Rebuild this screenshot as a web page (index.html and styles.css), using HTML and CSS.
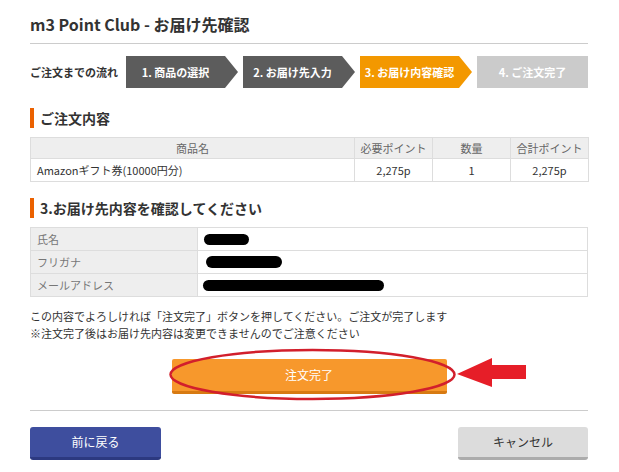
FILE: index.html
```html
<!DOCTYPE html>
<html lang="ja">
<head>
<meta charset="utf-8">
<title>m3 Point Club - お届け先確認</title>
<link rel="stylesheet" href="styles.css">
</head>
<body>
<div class="page">
  <h1 class="title">m3 Point Club - お届け先確認</h1>

  <div class="flow">
    <div class="flow-label">ご注文までの流れ</div>
    <div class="steps">
      <div class="step step-done">1. 商品の選択</div>
      <div class="step step-done">2. お届け先入力</div>
      <div class="step step-current">3. お届け内容確認</div>
      <div class="step step-next">4. ご注文完了</div>
    </div>
  </div>

  <h2 class="section-heading first">ご注文内容</h2>
  <table class="order-table">
    <thead>
      <tr>
        <th class="col-name">商品名</th>
        <th class="col-num">必要ポイント</th>
        <th class="col-num">数量</th>
        <th class="col-num">合計ポイント</th>
      </tr>
    </thead>
    <tbody>
      <tr>
        <td class="left">Amazonギフト券(10000円分)</td>
        <td>2,275p</td>
        <td>1</td>
        <td>2,275p</td>
      </tr>
    </tbody>
  </table>

  <h2 class="section-heading second">3.お届け先内容を確認してください</h2>
  <table class="address-table">
    <tbody>
      <tr>
        <th>氏名</th>
        <td><span class="redact redact-name"></span></td>
      </tr>
      <tr>
        <th>フリガナ</th>
        <td><span class="redact redact-kana"></span></td>
      </tr>
      <tr>
        <th>メールアドレス</th>
        <td><span class="redact redact-mail"></span></td>
      </tr>
    </tbody>
  </table>

  <p class="notice">この内容でよろしければ「注文完了」ボタンを押してください。ご注文が完了します<br>※注文完了後はお届け先内容は変更できませんのでご注意ください</p>

  <div class="submit-row">
    <button class="btn btn-submit" type="button">注文完了</button>
    <svg class="annotation" width="558" height="65" viewBox="0 0 558 65" aria-hidden="true">
      <ellipse cx="282.5" cy="30.5" rx="142" ry="24.5" fill="none" stroke="#d21f2c" stroke-width="2.5"/>
      <polygon points="427,30 462,14 462,21 496,21 496,35 462,35 462,43" fill="#e61e28"/>
    </svg>
  </div>

  <div class="footer-buttons">
    <button class="btn btn-back" type="button">前に戻る</button>
    <button class="btn btn-cancel" type="button">キャンセル</button>
  </div>
</div>
</body>
</html>
```

FILE: styles.css
```css
* {
  box-sizing: border-box;
}

body {
  margin: 0;
  background: #ffffff;
  color: #333333;
  font-family: "Noto Sans CJK JP", "Noto Sans", sans-serif;
}

.page {
  width: 558px;
  margin-left: 30px;
}

.title {
  margin: 0;
  padding: 14px 0 9px;
  font-size: 16px;
  line-height: 20px;
  font-weight: 700;
  color: #333333;
  border-bottom: 1px solid #cccccc;
}

.flow {
  display: flex;
  align-items: center;
  margin-top: 12px;
  height: 32px;
}

.flow-label {
  width: 98px;
  font-size: 11px;
  font-weight: 700;
  color: #333333;
}

.steps {
  display: flex;
  gap: 5px;
}

.step {
  width: 112px;
  height: 32px;
  padding-right: 13px;
  display: flex;
  align-items: center;
  justify-content: center;
  font-size: 11px;
  font-weight: 700;
  color: #ffffff;
  clip-path: polygon(0 0, calc(100% - 13px) 0, 100% 50%, calc(100% - 13px) 100%, 0 100%);
}

.step-done {
  background: #5c5c5c;
}

.step-current {
  background: #f39800;
}

.step-next {
  width: 111px;
  padding-right: 0;
  background: #cbcbcb;
  clip-path: none;
}

.section-heading {
  margin: 0;
  height: 20px;
  border-left: 4px solid #eb6100;
  padding-left: 6px;
  font-size: 14px;
  line-height: 20px;
  font-weight: 700;
  color: #333333;
}

.section-heading.first {
  margin-top: 20px;
}

.section-heading.second {
  margin-top: 16px;
}

table {
  width: 558px;
  table-layout: fixed;
  border-collapse: collapse;
  margin-top: 9px;
  font-size: 11px;
  line-height: 14px;
}

.order-table th,
.order-table td,
.address-table th,
.address-table td {
  border: 1px solid #dddddd;
  padding: 0 4px;
  white-space: nowrap;
}

.order-table th {
  height: 21px;
  background: #eeeeee;
  font-weight: 400;
  color: #666666;
  text-align: center;
}

.order-table td {
  height: 23px;
  text-align: center;
  color: #333333;
}

.order-table td.left {
  text-align: left;
  padding-left: 6px;
}

.col-name {
  width: 324px;
}

.col-num {
  width: 78px;
}

.address-table th {
  width: 167px;
  height: 23px;
  padding-left: 6px;
  background: #eeeeee;
  font-weight: 400;
  color: #777777;
  text-align: left;
}

.address-table td {
  height: 23px;
  padding: 0 5px;
}

.redact {
  display: block;
  height: 11px;
  border-radius: 6px;
  background: #000000;
}

.redact-name {
  width: 45px;
  margin-left: 1px;
}

.redact-kana {
  width: 76px;
  height: 12px;
  margin-left: 3px;
}

.redact-mail {
  width: 181px;
}

.notice {
  margin: 11px 0 0;
  font-size: 11px;
  line-height: 17px;
  color: #333333;
}

.submit-row {
  position: relative;
  display: flex;
  justify-content: center;
  margin-top: 17px;
  padding-bottom: 16px;
  border-bottom: 1px solid #cccccc;
}

.btn {
  border: none;
  margin: 0;
  padding: 0;
  font-family: inherit;
  font-size: 12px;
  line-height: 16px;
  cursor: pointer;
}

.btn-submit {
  width: 275px;
  height: 35px;
  border-radius: 2px;
  background: #f7982c;
  border-bottom: 3px solid #d77a12;
  color: #ffffff;
}

.annotation {
  position: absolute;
  left: 0;
  top: -15px;
  overflow: visible;
}

.footer-buttons {
  display: flex;
  justify-content: space-between;
  margin-top: 16px;
}

.btn-back {
  width: 131px;
  height: 33px;
  border-radius: 3px;
  background: #3e4e9e;
  border-bottom: 3px solid #2c3980;
  color: #ffffff;
}

.btn-cancel {
  width: 130px;
  height: 33px;
  border-radius: 3px;
  background: #dcdcdc;
  border-bottom: 3px solid #acacac;
  color: #333333;
}
```
